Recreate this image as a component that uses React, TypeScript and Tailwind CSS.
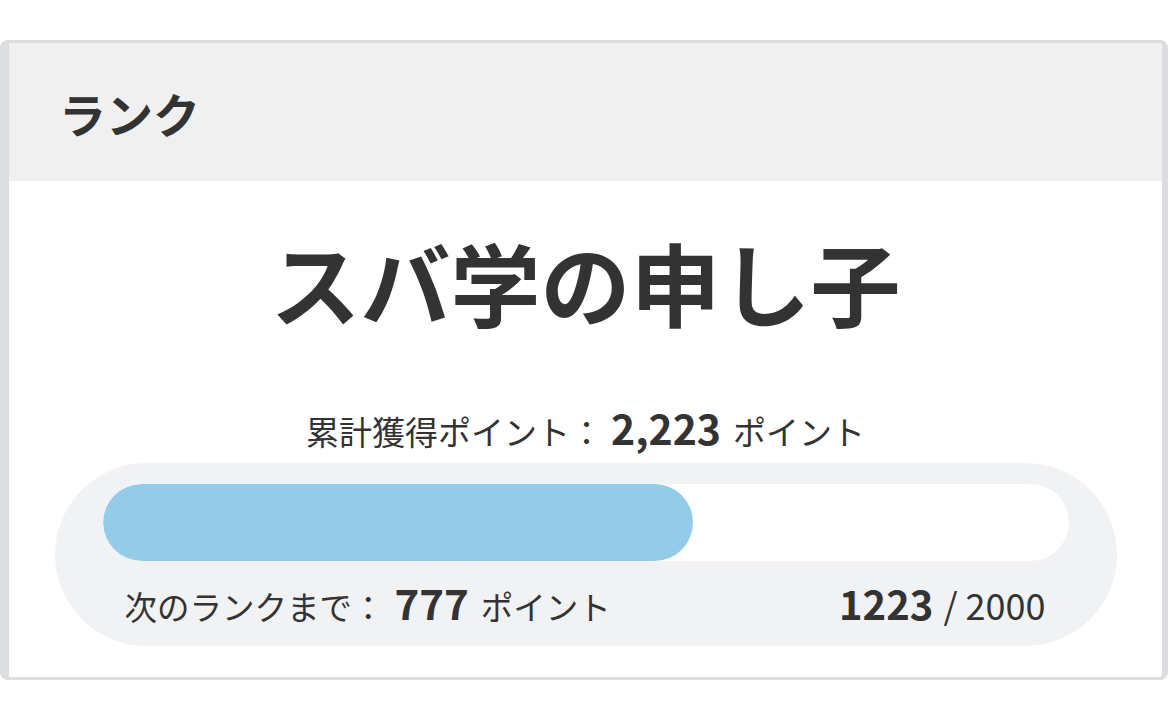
export default function App() {
  const current = 1223;
  const max = 2000;
  const pct = (current / max) * 100;
  return (
    <div
      className="w-[1170px] h-[723px] bg-white pt-[40px] text-[#333333]"
      style={{ fontFamily: '"Noto Sans CJK JP", "Noto Sans", sans-serif' }}
    >
      <div className="w-[1168px] h-[640px] border-l-[9px] border-t-[3px] border-r-[6px] border-b-[3px] border-[#dcdde1] rounded-[8px] overflow-hidden flex flex-col bg-white">
        <div className="h-[138px] bg-[#f0f0f0] flex items-center pl-[50px]">
          <span className="text-[47px] font-bold leading-none">ランク</span>
        </div>
        <div className="flex-1 flex flex-col items-center">
          <div className="mt-[55px] text-[90px] font-bold leading-none">スバ学の申し子</div>
          <div className="mt-[81px] flex items-baseline text-[33px] leading-none">
            <span>累計獲得ポイント：</span>
            <span className="text-[41px] font-bold ml-[8px] mr-[12px]">2,223</span>
            <span>ポイント</span>
          </div>
          <div className="mt-[15px] w-[1062px] h-[183px] rounded-full bg-[#f1f2f4] px-[48px] pt-[21px] flex flex-col">
            <div className="h-[77px] rounded-full bg-white overflow-hidden">
              <div className="h-full rounded-full bg-[#93cbe9]" style={{ width: `${pct}%` }} />
            </div>
            <div className="mt-[20px] flex items-baseline justify-between pl-[22px] pr-[23px]">
              <div className="flex items-baseline text-[32.5px] leading-none">
                <span>次のランクまで：</span>
                <span className="text-[42px] font-bold ml-[10px] mr-[12px]">777</span>
                <span>ポイント</span>
              </div>
              <div className="flex items-baseline text-[36px] leading-none">
                <span className="text-[40px] font-bold">1223</span>
                <span className="ml-[10px]">/ 2000</span>
              </div>
            </div>
          </div>
        </div>
      </div>
    </div>
  );
}
